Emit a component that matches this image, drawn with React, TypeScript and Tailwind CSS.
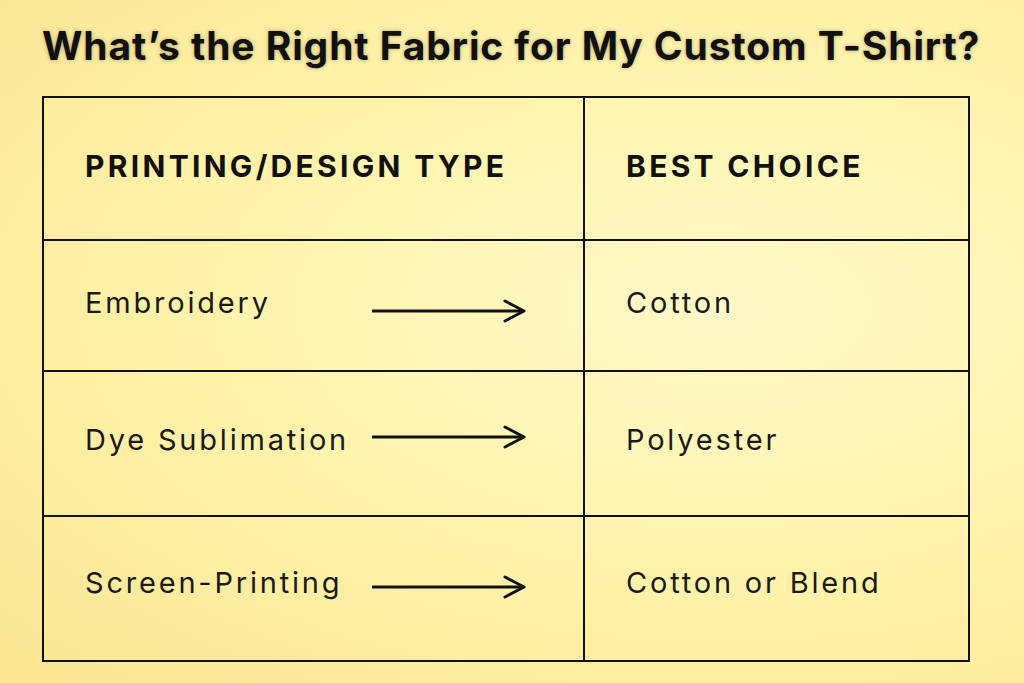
const rows = [
  { type: "Embroidery", choice: "Cotton", h: "h-[131px]", pad: "pb-[5px]", arrow: "mt-[16px]" },
  { type: "Dye Sublimation", choice: "Polyester", h: "h-[145px]", pad: "pb-[7px]", arrow: "mt-[-6px]" },
  { type: "Screen-Printing", choice: "Cotton or Blend", h: "h-[143px]", pad: "pb-[12px]", arrow: "mt-[8px]" },
];

function Arrow({ className }: { className: string }) {
  return (
    <svg width="156" height="24" viewBox="0 0 156 24" className={`shrink-0 ${className}`}>
      <path d="M1 12 H151" stroke="#111" strokeWidth="3" strokeLinecap="round" />
      <path d="M133 2 L152 12 L133 22" stroke="#111" strokeWidth="3" fill="none" strokeLinecap="round" strokeLinejoin="round" />
    </svg>
  );
}

export default function App() {
  return (
    <div
      className="w-[1024px] h-[683px] overflow-hidden bg-[#fdf2a4] bg-[radial-gradient(ellipse_at_70%_45%,#fff9c8_0%,#fff4ae_45%,#fbe692_100%)] flex flex-col items-start pl-[42px]"
      style={{ fontFamily: "Inter, 'Noto Sans', sans-serif" }}
    >
      <h1 className="mt-[20px] h-[76px] text-[39px] font-bold text-[#111] tracking-[0.9px] leading-[52px] whitespace-nowrap [text-shadow:0_0_4px_rgba(0,0,0,0.3)]">
        What’s the Right Fabric for My Custom T-Shirt?
      </h1>
      <div className="w-[928px] border-2 border-[#111] flex flex-col">
        {/* header row */}
        <div className="flex h-[143px] border-b-2 border-[#111]">
          <div className="w-[541px] border-r-2 border-[#111] flex items-center pl-[41px] pb-[4px]">
            <span className="text-[30px] font-bold text-[#111] tracking-[3.3px]">PRINTING/DESIGN TYPE</span>
          </div>
          <div className="flex-1 flex items-center pl-[41px] pb-[4px]">
            <span className="text-[30px] font-bold text-[#111] tracking-[3.3px]">BEST CHOICE</span>
          </div>
        </div>
        {rows.map((r, i) => (
          <div key={r.type} className={`flex ${r.h} ${i < rows.length - 1 ? "border-b-2 border-[#111]" : ""}`}>
            <div className={`w-[541px] border-r-2 border-[#111] flex items-center pl-[41px] ${r.pad}`}>
              <span className="w-[287px] text-[29px] text-[#1a1a1a] tracking-[2.8px]">{r.type}</span>
              <Arrow className={r.arrow} />
            </div>
            <div className={`flex-1 flex items-center pl-[41px] ${r.pad}`}>
              <span className="text-[29px] text-[#1a1a1a] tracking-[2.8px]">{r.choice}</span>
            </div>
          </div>
        ))}
      </div>
    </div>
  );
}
